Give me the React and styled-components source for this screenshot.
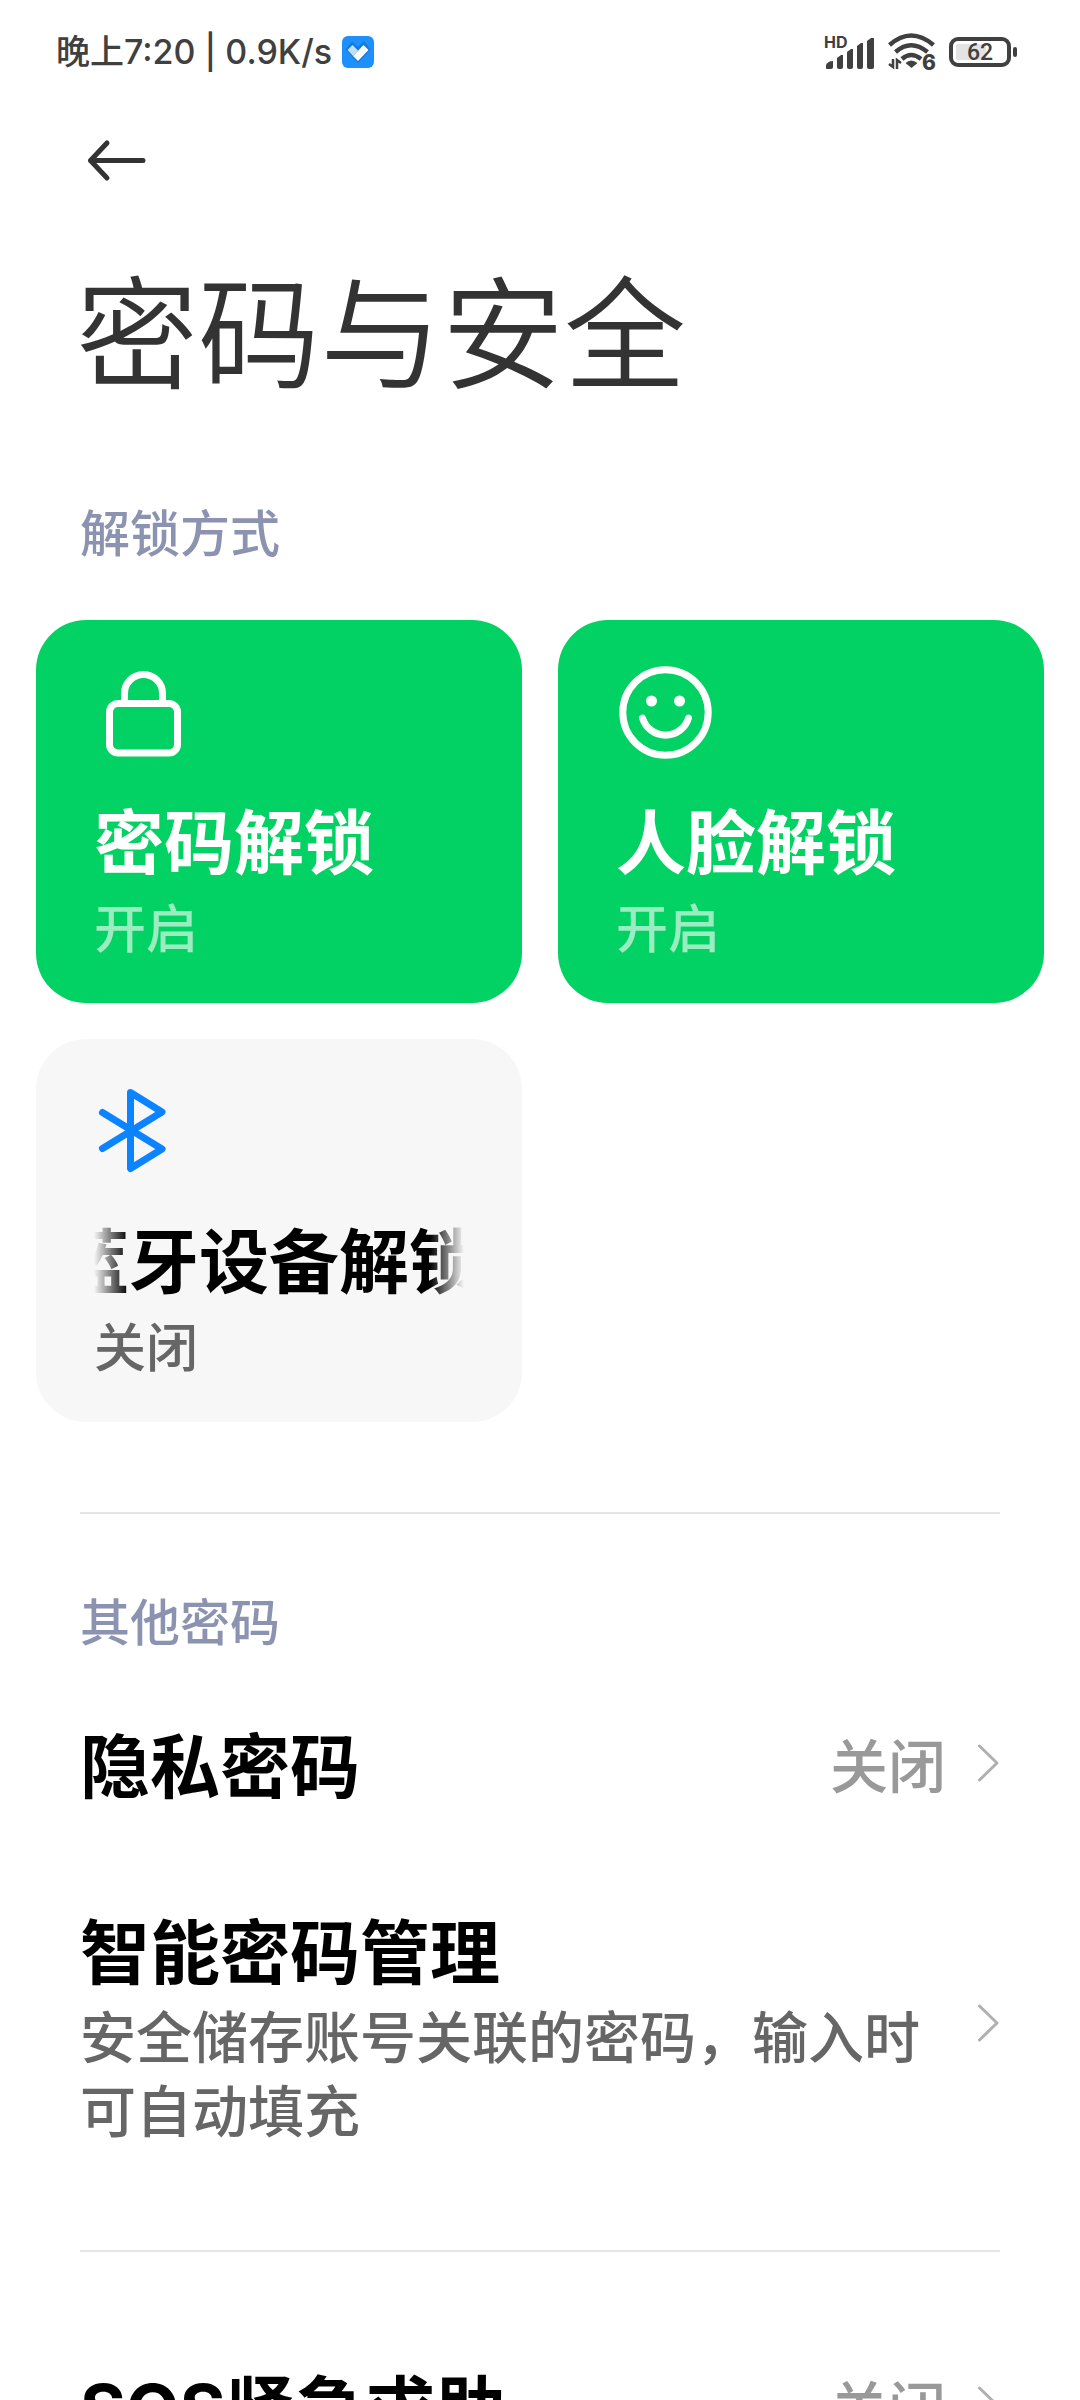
import React from "react";
import styled, { createGlobalStyle, css } from "styled-components";

const GlobalStyle = createGlobalStyle`
  * { box-sizing: border-box; }
  body {
    margin: 0;
    background: #fff;
    color: #000;
    font-family: "Noto Sans CJK SC", sans-serif;
  }
  button { font: inherit; color: inherit; border: 0; background: none; padding: 0; text-align: left; }
  h1, h2, p { margin: 0; }
`;

const Screen = styled.div`
  height: 100vh;
  overflow: hidden;
`;

const StatusBar = styled.header`
  display: flex;
  align-items: center;
  justify-content: space-between;
  height: 104px;
  padding: 0 63px 0 56px;
  color: #404040;
  font-family: Inter, "Noto Sans CJK SC", sans-serif;

  svg { overflow: visible; }
`;

const StatusGroup = styled.div`
  display: flex;
  align-items: center;
  gap: ${(p) => p.$gap}px;
  font-size: 34px;
  font-weight: 500;
  line-height: 48px;
`;

const TopBar = styled.nav`
  display: flex;
  padding: 32px 80px 0;
`;

const BackButton = styled.button`
  display: flex;
  width: 72px;
  height: 48px;
`;

const PageTitle = styled.h1`
  padding: 62px 76px 0;
  font-size: 122px;
  font-weight: 350;
  line-height: 160px;
  color: #333;
`;

const SectionLabel = styled.h2`
  padding: 0 80px;
  font-size: 50px;
  font-weight: 500;
  line-height: 74px;
  color: #8c93b0;
`;

const UnlockSection = styled.section`
  padding: 87px 0 90px;
`;

const CardGrid = styled.div`
  display: grid;
  grid-template-columns: 1fr 1fr;
  gap: 36px;
  padding: 53px 36px 0;
`;

const Card = styled.button`
  display: flex;
  flex-direction: column;
  min-width: 0;
  padding: 43px 58px 38px;
  border-radius: 50px;
  background: ${(p) => (p.$on ? "#02d163" : "#f7f7f7")};
  color: ${(p) => (p.$on ? "#fff" : "#000")};
`;

const IconBox = styled.span`
  display: flex;
  width: 100px;
  height: 100px;
  margin-bottom: 28px;
`;

const ItemTitle = styled.span`
  font-size: 70px;
  font-weight: 700;
  line-height: 96px;
  white-space: nowrap;
`;

const Latin = styled.span`
  font-family: Inter, sans-serif;
  line-height: 1;
`;

const CardTitle = styled(ItemTitle)`
  width: 100%;
  ${(p) =>
    p.$scrolling &&
    css`
      overflow: hidden;
      text-indent: -35px;
      mask-image: linear-gradient(to right, transparent, #000 34px, #000 calc(100% - 34px), transparent);
    `}
`;

const CardState = styled.span`
  font-size: 52px;
  font-weight: 500;
  line-height: 78px;
  color: ${(p) => (p.$on ? "rgba(255, 255, 255, 0.6)" : "#666")};
`;

const Divider = styled.hr`
  height: 2px;
  margin: 0 80px;
  border: 0;
  background: #e5e5e5;
`;

const ListSection = styled.section`
  padding: ${(p) => (p.$labelled ? "68px 0 60px" : "60px 0")};
`;

const List = styled.div`
  padding-top: ${(p) => (p.$labelled ? 14 : 0)}px;
`;

const Row = styled.button`
  display: flex;
  align-items: center;
  gap: 32px;
  width: 100%;
  padding: 45px 80px;
`;

const RowText = styled.span`
  display: flex;
  flex: 1;
  flex-direction: column;
  min-width: 0;
`;

const RowDescription = styled.span`
  font-size: 56px;
  font-weight: 500;
  line-height: 74px;
  color: #666;
`;

const RowValue = styled.span`
  font-size: 58px;
  font-weight: 500;
  line-height: 96px;
  color: #999;
`;

const HeartBadge = () => (
  <svg width="32" height="32" viewBox="0 0 32 32" aria-hidden="true">
    <rect width="32" height="32" rx="6" fill="#1e90fc" />
    <path d="M10 5.500 16 11 22 5.500 28.500 13.500 16 27 3.500 13.500Z" fill="#1479dc" />
    <path d="M10.500 9 16 14.500 11 20 5.500 14Z" fill="#c3def8" />
    <path d="M21.500 9 26.500 14 16 25 11 20Z" fill="#fff" />
  </svg>
);

const SignalIcon = () => (
  <svg width="51" height="36" viewBox="0 0 51 36" fill="currentColor" aria-hidden="true">
    <text x="0" y="14" fontFamily="Inter, sans-serif" fontSize="16" fontWeight="700">HD</text>
    <path d="M2 34V31Q4 27 9 27V33Q9 35 7 35H3Q2 35 2 34Z" />
    <path d="M13 33V24L17 21H19V33Q19 35 17 35H15Q13 35 13 33Z" />
    <path d="M23 33V18L27 15H29V33Q29 35 27 35H25Q23 35 23 33Z" />
    <path d="M33 33V12L37 9H39V33Q39 35 37 35H35Q33 35 33 33Z" />
    <path d="M43 33V7L47 4H50V33Q50 35 48 35H45Q43 35 43 33Z" />
  </svg>
);

const WifiIcon = () => (
  <svg width="48" height="44" viewBox="0 -3 48 44" fill="none" stroke="currentColor" aria-hidden="true">
    <g strokeWidth="4.500">
      <path d="M1.500 12Q23 -7 45.500 12" />
      <path d="M7.500 19Q23 5.500 39.500 19" />
      <path d="M14 26Q23 18 33 26" />
    </g>
    <path d="M17.500 30Q23 25 29.500 30L23.500 35Z" fill="currentColor" stroke="none" />
    <path d="M5 26V34L1 31M9 36V27L13 30" strokeWidth="2.500" />
    <text x="34" y="37" fontFamily="Inter, sans-serif" fontSize="21" fontWeight="800" fill="currentColor" stroke="none">6</text>
  </svg>
);

const BatteryIcon = () => (
  <svg width="68" height="32" viewBox="0 0 68 32" aria-hidden="true">
    <rect x="2" y="3" width="58" height="26" rx="7" fill="none" stroke="currentColor" strokeWidth="4" />
    <rect x="7" y="8" width="30" height="16" rx="2" fill="#e3e3e3" />
    <rect x="64" y="11" width="4" height="10" rx="2" fill="currentColor" />
    <text x="31" y="24" textAnchor="middle" fontFamily="Roboto, sans-serif" fontSize="23" fontWeight="500" fill="currentColor">62</text>
  </svg>
);

const BackIcon = () => (
  <svg width="72" height="48" viewBox="0 0 72 48" fill="none" stroke="#333" strokeWidth="5" strokeLinecap="round" strokeLinejoin="round" aria-hidden="true">
    <path d="M27 7 10.500 24.500 27 42M10.500 24.500H63" />
  </svg>
);

const LockIcon = () => (
  <svg width="100" height="100" viewBox="0 0 100 100" fill="none" stroke="#fff" strokeWidth="7" aria-hidden="true">
    <rect x="15.500" y="40.500" width="68" height="49.500" rx="8.500" />
    <path d="M30.500 40V30.500A19 19 0 0 1 68.500 30.500V40" />
  </svg>
);

const FaceIcon = () => (
  <svg width="100" height="100" viewBox="0 0 100 100" fill="none" stroke="#fff" strokeWidth="7" strokeLinecap="round" aria-hidden="true">
    <circle cx="49.500" cy="49.500" r="42.700" />
    <circle cx="35.500" cy="38" r="5.500" fill="#fff" stroke="none" />
    <circle cx="63.500" cy="38" r="5.500" fill="#fff" stroke="none" />
    <path d="M26.500 55A24 24 0 0 0 72.500 55" />
  </svg>
);

const BluetoothIcon = () => (
  <svg width="100" height="100" viewBox="0 0 100 100" fill="none" stroke="#0d84ff" strokeWidth="7" strokeLinecap="round" strokeLinejoin="round" aria-hidden="true">
    <path d="M8.500 30.500 68 67 36.500 86.500V10.500L68 30 8.500 66.500" />
  </svg>
);

const Chevron = () => (
  <svg width="22" height="42" viewBox="0 0 22 42" fill="none" stroke="#b0b0b0" strokeWidth="3" strokeLinecap="round" strokeLinejoin="round" aria-hidden="true">
    <path d="M1.500 4 19 21 1.500 38" />
  </svg>
);

function UnlockCard({ icon, title, on, scrolling }) {
  return (
    <Card type="button" $on={on}>
      <IconBox>{icon}</IconBox>
      <CardTitle $scrolling={scrolling}>{title}</CardTitle>
      <CardState $on={on}>{on ? "开启" : "关闭"}</CardState>
    </Card>
  );
}

function SettingRow({ title, description, value }) {
  return (
    <Row type="button">
      <RowText>
        <ItemTitle>{title}</ItemTitle>
        {description && <RowDescription>{description}</RowDescription>}
      </RowText>
      {value && <RowValue>{value}</RowValue>}
      <Chevron />
    </Row>
  );
}

export default function App() {
  return (
    <Screen lang="zh-CN">
      <GlobalStyle />
      <StatusBar>
        <StatusGroup $gap={10}>
          <span>晚上7:20 | 0.9K/s</span>
          <HeartBadge />
        </StatusGroup>
        <StatusGroup $gap={13}>
          <SignalIcon />
          <WifiIcon />
          <BatteryIcon />
        </StatusGroup>
      </StatusBar>
      <TopBar>
        <BackButton type="button" aria-label="返回">
          <BackIcon />
        </BackButton>
      </TopBar>
      <main>
        <PageTitle>密码与安全</PageTitle>
        <UnlockSection>
          <SectionLabel>解锁方式</SectionLabel>
          <CardGrid>
            <UnlockCard icon={<LockIcon />} title="密码解锁" on />
            <UnlockCard icon={<FaceIcon />} title="人脸解锁" on />
            <UnlockCard icon={<BluetoothIcon />} title="蓝牙设备解锁" scrolling />
          </CardGrid>
        </UnlockSection>
        <Divider />
        <ListSection $labelled>
          <SectionLabel>其他密码</SectionLabel>
          <List $labelled>
            <SettingRow title="隐私密码" value="关闭" />
            <SettingRow title="智能密码管理" description="安全储存账号关联的密码，输入时可自动填充" />
          </List>
        </ListSection>
        <Divider />
        <ListSection>
          <List>
            <SettingRow title={<><Latin>SOS</Latin>紧急求助</>} value="关闭" />
          </List>
        </ListSection>
      </main>
    </Screen>
  );
}
